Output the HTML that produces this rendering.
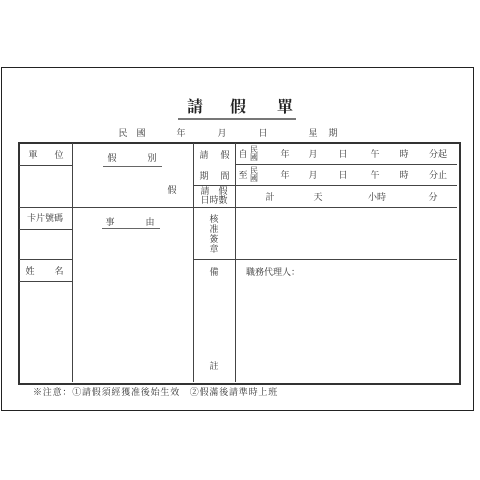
<!DOCTYPE html>
<html><head><meta charset="utf-8"><style>
html,body{margin:0;padding:0;background:#fff;}
body{width:480px;height:480px;position:relative;overflow:hidden;font-family:"Liberation Serif","Noto Serif CJK SC","Noto Sans CJK TC",serif;color:#333;}
.l{position:absolute;background:#444;}
.t{position:absolute;font-size:9px;line-height:10px;white-space:nowrap;transform:translate(-50%,-50%);}
</style></head><body>
<div style="position:absolute;left:1px;top:67px;width:471px;height:342px;border:1px solid #222;"></div>
<div class="t" style="left:195px;top:108px;font-size:16px;line-height:18px;font-weight:bold;color:#222">請</div>
<div class="t" style="left:238px;top:108px;font-size:16px;line-height:18px;font-weight:bold;color:#222">假</div>
<div class="t" style="left:285px;top:108px;font-size:16px;line-height:18px;font-weight:bold;color:#222">單</div>
<div class="l" style="left:178px;top:118px;width:118px;height:2px;background:#777"></div>
<div class="t" style="left:123px;top:133px">民</div>
<div class="t" style="left:141px;top:133px">國</div>
<div class="t" style="left:181px;top:133px">年</div>
<div class="t" style="left:222px;top:133px">月</div>
<div class="t" style="left:263px;top:133px">日</div>
<div class="t" style="left:313px;top:133px">星</div>
<div class="t" style="left:333px;top:133px">期</div>
<div style="position:absolute;left:18px;top:142px;width:439px;height:239px;border:2px solid #333;"></div>
<div class="l" style="left:72px;top:143px;width:1px;height:239px"></div>
<div class="l" style="left:193px;top:143px;width:1px;height:239px"></div>
<div class="l" style="left:235px;top:143px;width:1px;height:239px"></div>
<div class="l" style="left:19px;top:165px;width:53px;height:1px"></div>
<div class="l" style="left:19px;top:207px;width:438px;height:1px"></div>
<div class="l" style="left:19px;top:229px;width:53px;height:1px"></div>
<div class="l" style="left:19px;top:259px;width:53px;height:1px"></div>
<div class="l" style="left:19px;top:281px;width:53px;height:1px"></div>
<div class="l" style="left:235px;top:164px;width:222px;height:1px"></div>
<div class="l" style="left:193px;top:185px;width:264px;height:1px"></div>
<div class="l" style="left:193px;top:259px;width:264px;height:1px"></div>
<div class="t" style="left:33px;top:155px">單</div>
<div class="t" style="left:59px;top:155px">位</div>
<div class="t" style="left:45px;top:218px">卡片號碼</div>
<div class="t" style="left:30px;top:271px">姓</div>
<div class="t" style="left:59px;top:271px">名</div>
<div class="t" style="left:112px;top:158px">假</div>
<div class="t" style="left:152px;top:158px">別</div>
<div class="l" style="left:103px;top:166px;width:59px;height:1px;background:#666"></div>
<div class="t" style="left:172px;top:190px">假</div>
<div class="t" style="left:110px;top:222px">事</div>
<div class="t" style="left:150px;top:222px">由</div>
<div class="l" style="left:102px;top:228px;width:58px;height:1px;background:#666"></div>
<div class="t" style="left:204px;top:155px">請</div>
<div class="t" style="left:225px;top:155px">假</div>
<div class="t" style="left:204px;top:176px">期</div>
<div class="t" style="left:225px;top:176px">間</div>
<div class="t" style="left:214px;top:196px;line-height:9px;text-align:center">請　假<br>日時數</div>
<div class="t" style="left:214px;top:234px;line-height:10px;text-align:center">核<br>准<br>簽<br>章</div>
<div class="t" style="left:214px;top:272px">備</div>
<div class="t" style="left:214px;top:366px">註</div>
<div class="t" style="left:243px;top:154px">自</div>
<div class="t" style="left:254px;top:154px;font-size:8px;line-height:8px;text-align:center">民<br>國</div>
<div class="t" style="left:243px;top:175px">至</div>
<div class="t" style="left:254px;top:175px;font-size:8px;line-height:8px;text-align:center">民<br>國</div>
<div class="t" style="left:285px;top:154px">年</div><div class="t" style="left:313px;top:154px">月</div><div class="t" style="left:343px;top:154px">日</div><div class="t" style="left:375px;top:154px">午</div><div class="t" style="left:404px;top:154px">時</div><div class="t" style="left:438px;top:154px">分起</div>
<div class="t" style="left:285px;top:175px">年</div><div class="t" style="left:313px;top:175px">月</div><div class="t" style="left:343px;top:175px">日</div><div class="t" style="left:375px;top:175px">午</div><div class="t" style="left:404px;top:175px">時</div><div class="t" style="left:438px;top:175px">分止</div>
<div class="t" style="left:270px;top:197px">計</div><div class="t" style="left:318px;top:197px">天</div><div class="t" style="left:377px;top:197px">小時</div><div class="t" style="left:433px;top:197px">分</div>
<div class="t" style="left:273px;top:272px">職務代理人：</div>
<div style="position:absolute;left:33px;top:387px;font-size:9px;line-height:10px;white-space:nowrap;letter-spacing:0.8px">※注意：①請假須經獲准後始生效　②假滿後請準時上班</div>
</body></html>
